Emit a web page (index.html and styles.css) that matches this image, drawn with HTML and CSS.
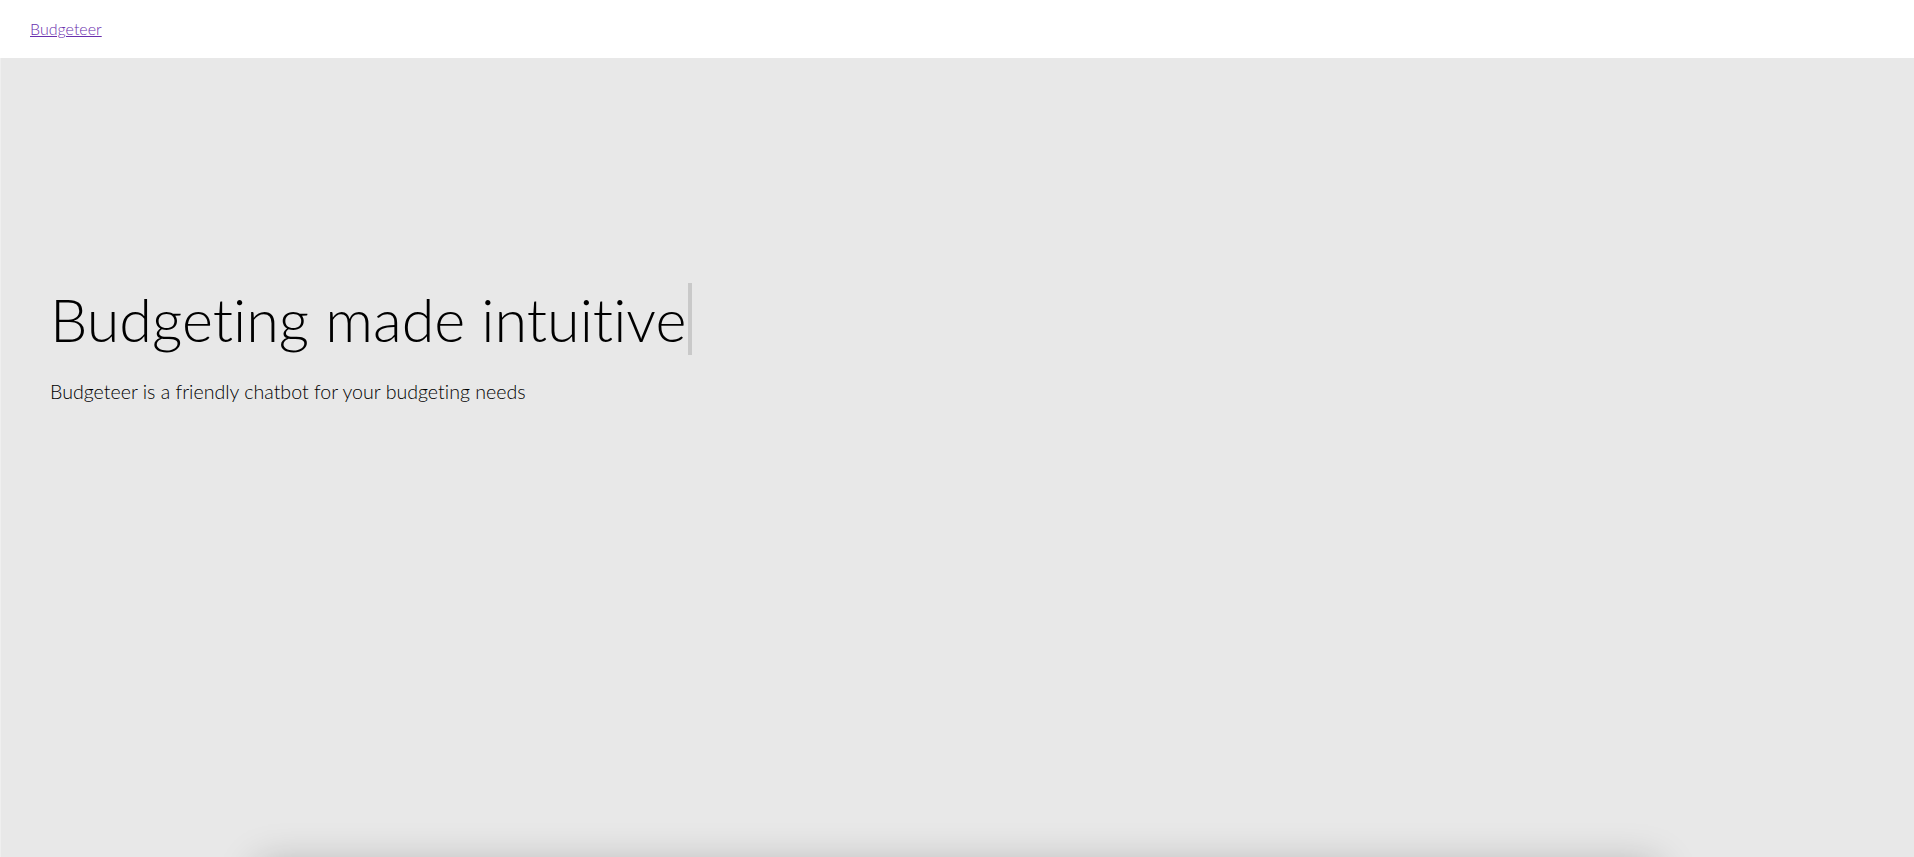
FILE: index.html
```html
<!DOCTYPE html>
<html lang="en">
<head>
<meta charset="utf-8">
<title>Budgeteer</title>
<link rel="stylesheet" href="styles.css">
</head>
<body>
<header class="topbar">
  <a class="brand" href="#">Budgeteer</a>
</header>
<main class="page">
  <section class="hero">
    <h1 class="hero-title"><span class="typed">Budgeting made intuitive</span></h1>
    <p class="hero-sub">Budgeteer is a friendly chatbot for your budgeting needs</p>
  </section>
  <section class="chat-card"></section>
</main>
</body>
</html>
```

FILE: styles.css
```css
html, body {
  margin: 0;
  padding: 0;
}
body {
  font-family: Lato, "Open Sans", sans-serif;
  font-variant-ligatures: none;
  background: #e8e8e8;
  color: #000;
  overflow: hidden;
}
.topbar {
  height: 58px;
  background: #fff;
  display: flex;
  align-items: center;
  padding-left: 30px;
  box-sizing: border-box;
}
.brand {
  font-family: Lato, sans-serif;
  font-weight: 300;
  font-size: 16px;
  color: #6a2fae;
  text-decoration: underline;
  margin-top: -1px;
}
.page {
  background: #e8e8e8;
  border-left: 1px solid #efefef;
}
.hero {
  padding: 225px 0 0 49px;
  height: 574px;
  box-sizing: border-box;
}
.hero-title {
  margin: 0;
  font-family: Lato, sans-serif;
  font-weight: 300;
  font-size: 59.3px;
  line-height: normal;
}
.typed {
  border-right: 4px solid #c9c9c9;
  padding-right: 2px;
}
.hero-sub {
  margin: 25px 0 0;
  font-family: Lato, sans-serif;
  font-weight: 300;
  font-size: 19.6px;
  line-height: normal;
  color: #000;
}
.chat-card {
  width: 1400px;
  height: 500px;
  margin: 232px auto 0;
  background: #e8e8e8;
  box-shadow: 0 0 38px rgba(0, 0, 0, 0.24);
}
```
